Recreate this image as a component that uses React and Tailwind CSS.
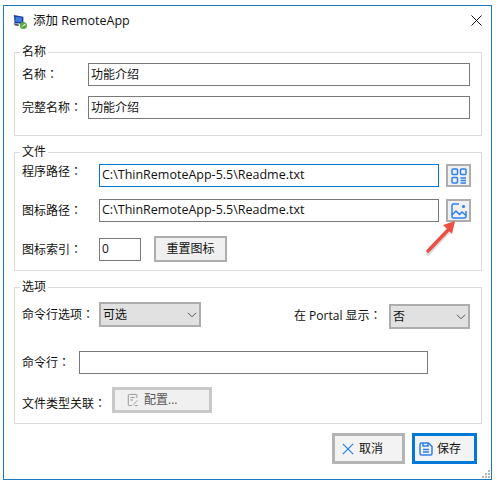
import React from 'react'

const FONT = "font-['Open_Sans','Noto_Sans_CJK_SC',sans-serif]"

const Chevron = () => (
  <svg width="10" height="6" viewBox="0 0 10 6" fill="none" stroke="#555" strokeWidth="1">
    <path d="M1 .8 5 4.800 9 .8" />
  </svg>
)

const Group = ({ title, className, children }) => (
  <fieldset className={`border border-[#dcdcdc] ml-[10px] mr-[9px] px-[7px] min-w-0 ${className}`}>
    <legend className="-ml-[2px] px-[2px] text-[12px] leading-[18px]">{title}</legend>
    {children}
  </fieldset>
)

// the colon sits centred in its cell in the picture, which is the TC glyph
const Label = ({ className, children }) => (
  <span className={`text-[12px] whitespace-nowrap shrink-0 ${className}`}>
    {children}
    <span className="font-['Noto_Sans_CJK_TC']">：</span>
  </span>
)

const Box = ({ className, children }) => (
  <div className={`h-[23px] border border-[#7a7a7a] px-[2px] flex items-center text-[12px] whitespace-nowrap overflow-hidden ${className}`}>
    {children}
  </div>
)

const Select = ({ className, value }) => (
  <div className={`h-[25px] border-2 border-[#adadad] bg-[#e1e1e1] pl-[2px] pr-[2px] flex items-center justify-between text-[12px] ${className}`}>
    <span>{value}</span>
    <Chevron />
  </div>
)

const IconButton = ({ children }) => (
  <div className="w-[25px] h-[23px] ml-[7px] border-2 border-[#adadad] bg-[#f0f0f0] flex items-center justify-center">
    {children}
  </div>
)

const App = () => {
  return (
    <div className={`relative w-[497px] h-[483px] bg-white pt-[5px] pl-[3px] text-[#111] ${FONT}`}>
      <div className="relative w-[489px] h-[475px] border border-[#1979c5] flex flex-col">
        {/* Title bar */}
        <div className="h-[30px] flex items-center justify-between pl-[9px] pr-[9px] shrink-0">
          <div className="flex items-center">
            <svg width="16" height="17" viewBox="0 0 20 20" className="mr-[4px]">
              <path d="M1 2 L13 4 L13 13 L2 12 Z" fill="#1b3d9c" />
              <path d="M3 4 L11 5 L11 11 L3 10 Z" fill="#3f7fe0" />
              <path d="M1 12 L7 13 L7 16 L2 15 Z" fill="#5b6170" />
              <circle cx="13" cy="15" r="4.500" fill="#5aa845" />
              <path d="M11 16.500 L15 13.500 M13.500 13.500 H15 V15" stroke="#fff" strokeWidth="1" fill="none" />
            </svg>
            <span className="text-[12.5px] leading-none">添加 RemoteApp</span>
          </div>
          <svg width="11" height="11" viewBox="0 0 11 11" stroke="#111" strokeWidth="1" className="-mt-[1px]">
            <path d="M.5 .5 L10.500 10.500 M10.500 .5 L.5 10.500" />
          </svg>
        </div>

        <Group title="名称" className="h-[93px] mt-[7px]">
          <div className="flex items-center mt-[2px] h-[23px]">
            <Label className="w-[66px]">名称</Label>
            <Box className="w-[382px]">功能介绍</Box>
          </div>
          <div className="flex items-center mt-[10px] h-[23px]">
            <Label className="w-[66px]">完整名称</Label>
            <Box className="w-[382px]">功能介绍</Box>
          </div>
        </Group>

        <Group title="文件" className="h-[128px] mt-[7px]">
          <div className="flex items-center mt-[3px]">
            <Label className="w-[77px] -mt-[9px]">程序路径</Label>
            <Box className="w-[340px] border-[#0078d7]! text-[12.5px]!">C:\ThinRemoteApp-5.5\Readme.txt</Box>
            <IconButton>
              <svg width="18" height="18" viewBox="0 0 18 18" fill="none" stroke="#2f80ed" strokeWidth="1.500">
                <rect x="2" y="2" width="5.500" height="5.500" rx="1" />
                <rect x="10.500" y="2" width="5.500" height="5.500" rx="1" />
                <rect x="2" y="10.500" width="5.500" height="5.500" rx="1" />
                <path d="M10.500 11h5.500M10.500 13.500h5.500M10.500 16h5.500" />
              </svg>
            </IconButton>
          </div>
          <div className="flex items-center mt-[12px]">
            <Label className="w-[77px]">图标路径</Label>
            <Box className="w-[340px] text-[12.5px]!">C:\ThinRemoteApp-5.5\Readme.txt</Box>
            <IconButton>
              <svg width="18" height="18" viewBox="0 0 18 18" fill="none" stroke="#2f80ed" strokeWidth="1.500">
                <path d="M9 2H3.500A1.500 1.500 0 0 0 2 3.500v11A1.500 1.500 0 0 0 3.500 16h11a1.500 1.500 0 0 0 1.500-1.500V9" />
                <path d="M2 13l4-4 3.500 3.500L12 10l4 3.500" />
                <circle cx="13.500" cy="4.500" r="1.600" fill="#2f80ed" stroke="none" />
              </svg>
            </IconButton>
          </div>
          <div className="flex items-center mt-[14px]">
            <Label className="w-[77px]">图标索引</Label>
            <Box className="w-[42px]">0</Box>
            <div className="w-[73px] h-[26px] ml-[13px] border-2 border-[#adadad] bg-[#f0f0f0] flex items-center justify-center text-[12px]">
              重置图标
            </div>
          </div>
        </Group>

        <Group title="选项" className="h-[146px] mt-[7px]">
          <div className="flex items-start justify-between mt-[6px] pr-[4px]">
            <div className="flex items-center">
              <Label className="w-[77px]">命令行选项</Label>
              <Select className="w-[102px]" value="可选" />
            </div>
            <div className="flex items-center mt-[2px]">
              <Label className="w-[95px] -mt-[3px]">在 Portal 显示</Label>
              <Select className="w-[81px]" value="否" />
            </div>
          </div>
          <div className="flex items-center mt-[22px]">
            <Label className="w-[57px]">命令行</Label>
            <Box className="w-[349px]" />
          </div>
          <div className="flex items-center mt-[12px]">
            <Label className="w-[90px] mt-[8px]">文件类型关联</Label>
            <div className="w-[100px] h-[26px] border-[3px] border-[#c8c8c8] bg-[#f0f0f0] flex items-center pl-[12px] text-[12px] text-[#555]">
              <svg width="12" height="14" viewBox="0 0 14 15" fill="none" stroke="#8a8a8a" strokeWidth="1" className="mr-[5px]">
                <path d="M11.500 5V2A1 1 0 0 0 10.500 1h-8A1 1 0 0 0 1.500 2v11a1 1 0 0 0 1 1h3" />
                <path d="M4 4.500h5M4 7.500h3M7 13l5-5M9 14h3.500" />
              </svg>
              配置...
            </div>
          </div>
        </Group>

        {/* Footer buttons */}
        <div className="flex justify-end gap-[7px] mt-[9px] pr-[14px]">
          <div className="w-[73px] h-[31px] border-[3px] border-[#b4b4b4] bg-[#f3f3f3] flex items-center pl-[7px] text-[12px]">
            <svg width="12" height="12" viewBox="0 0 14 14" stroke="#2f80ed" strokeWidth="1.500" className="mr-[5px]">
              <path d="M1 1 L13 13 M13 1 L1 13" />
            </svg>
            取消
          </div>
          <div className="w-[65px] h-[31px] border-[3px] border-[#0078d7] bg-[#f3f3f3] flex items-center pl-[4px] text-[12px]">
            <svg width="14" height="14" viewBox="0 0 14 14" fill="none" stroke="#2f80ed" strokeWidth="1.500" className="mr-[4px]">
              <path d="M2.500 1h7L13 4.500V11.500A1.500 1.500 0 0 1 11.500 13h-9A1.500 1.500 0 0 1 1 11.500v-9A1.500 1.500 0 0 1 2.500 1z" />
              <path d="M4 1v3h5V1M4 7.500h6M4 10h6" />
            </svg>
            保存
          </div>
        </div>

        {/* Resize grip */}
        <svg width="9" height="9" viewBox="0 0 9 9" fill="#b5b5b5" className="absolute right-0 bottom-0">
          <rect x="6" y="0" width="2" height="2" />
          <rect x="3" y="3" width="2" height="2" />
          <rect x="6" y="3" width="2" height="2" />
          <rect x="0" y="6" width="2" height="2" />
          <rect x="3" y="6" width="2" height="2" />
          <rect x="6" y="6" width="2" height="2" />
        </svg>
      </div>

      {/* Red annotation arrow */}
      <svg width="44" height="46" viewBox="0 0 44 46" className="absolute left-[423px] top-[216px]">
        <path d="M5 36 L27 12" stroke="#9a9a9a" strokeOpacity=".35" strokeWidth="4" strokeLinecap="round" transform="translate(0 2)" />
        <path d="M5 35 L27 12" stroke="#ea4f45" strokeWidth="3.500" strokeLinecap="round" />
        <path d="M32 5 L20 9 L29 18 Z" fill="#ea4f45" />
      </svg>
    </div>
  )
}

export default App
